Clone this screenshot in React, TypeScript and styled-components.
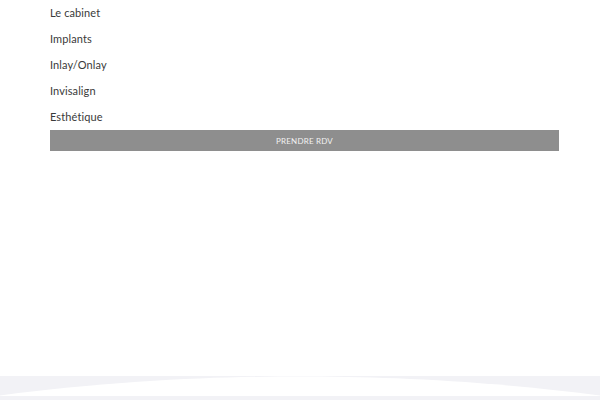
import React from "react";
import styled, { createGlobalStyle } from "styled-components";

const Global = createGlobalStyle`
  html, body { margin: 0; padding: 0; background: #ffffff; }
  body { font-family: "Lato", "Open Sans", sans-serif; }
`;

const Page = styled.div`
  height: 100vh;
  display: flex;
  flex-direction: column;
  overflow: hidden;
`;

const Menu = styled.nav`
  display: flex;
  flex-direction: column;
  padding: 0 41px 0 50px;
`;

const MenuList = styled.ul`
  list-style: none;
  margin: -1px 0 0;
  padding: 0;
`;

const MenuItem = styled.li`
  height: 26px;
  display: flex;
  align-items: center;
`;

const MenuLink = styled.a`
  font-size: 11px;
  color: #3a3a3a;
  text-decoration: none;
  letter-spacing: 0.1px;
`;

const CtaButton = styled.a`
  display: flex;
  align-items: center;
  justify-content: center;
  height: 21px;
  margin-top: 1px;
  background: #8e8e8e;
  color: #f2f2f2;
  font-size: 8px;
  letter-spacing: 0.2px;
  text-transform: uppercase;
  text-decoration: none;
`;

const Footer = styled.footer`
  margin-top: auto;
  height: 24px;
  line-height: 0;
`;

const Wave = styled.svg`
  display: block;
  width: 100%;
  height: 24px;
`;

const items = ["Le cabinet", "Implants", "Inlay/Onlay", "Invisalign", "Esthétique"];

export default function App() {
  return (
    <>
      <Global />
      <Page>
        <Menu>
          <MenuList>
            {items.map((t) => (
              <MenuItem key={t}>
                <MenuLink href="#">{t}</MenuLink>
              </MenuItem>
            ))}
          </MenuList>
          <CtaButton href="#">Prendre RDV</CtaButton>
        </Menu>
        <Footer>
          <Wave viewBox="0 0 600 24" preserveAspectRatio="none">
            <rect x="0" y="0" width="600" height="24" fill="#f2f2f6" />
            <path d="M0 19.5 C 120 4, 220 0.5, 300 0.5 C 380 0.5, 480 4, 600 19.5 L600 20 L0 20 Z" fill="#ffffff" />
          </Wave>
        </Footer>
      </Page>
    </>
  );
}
